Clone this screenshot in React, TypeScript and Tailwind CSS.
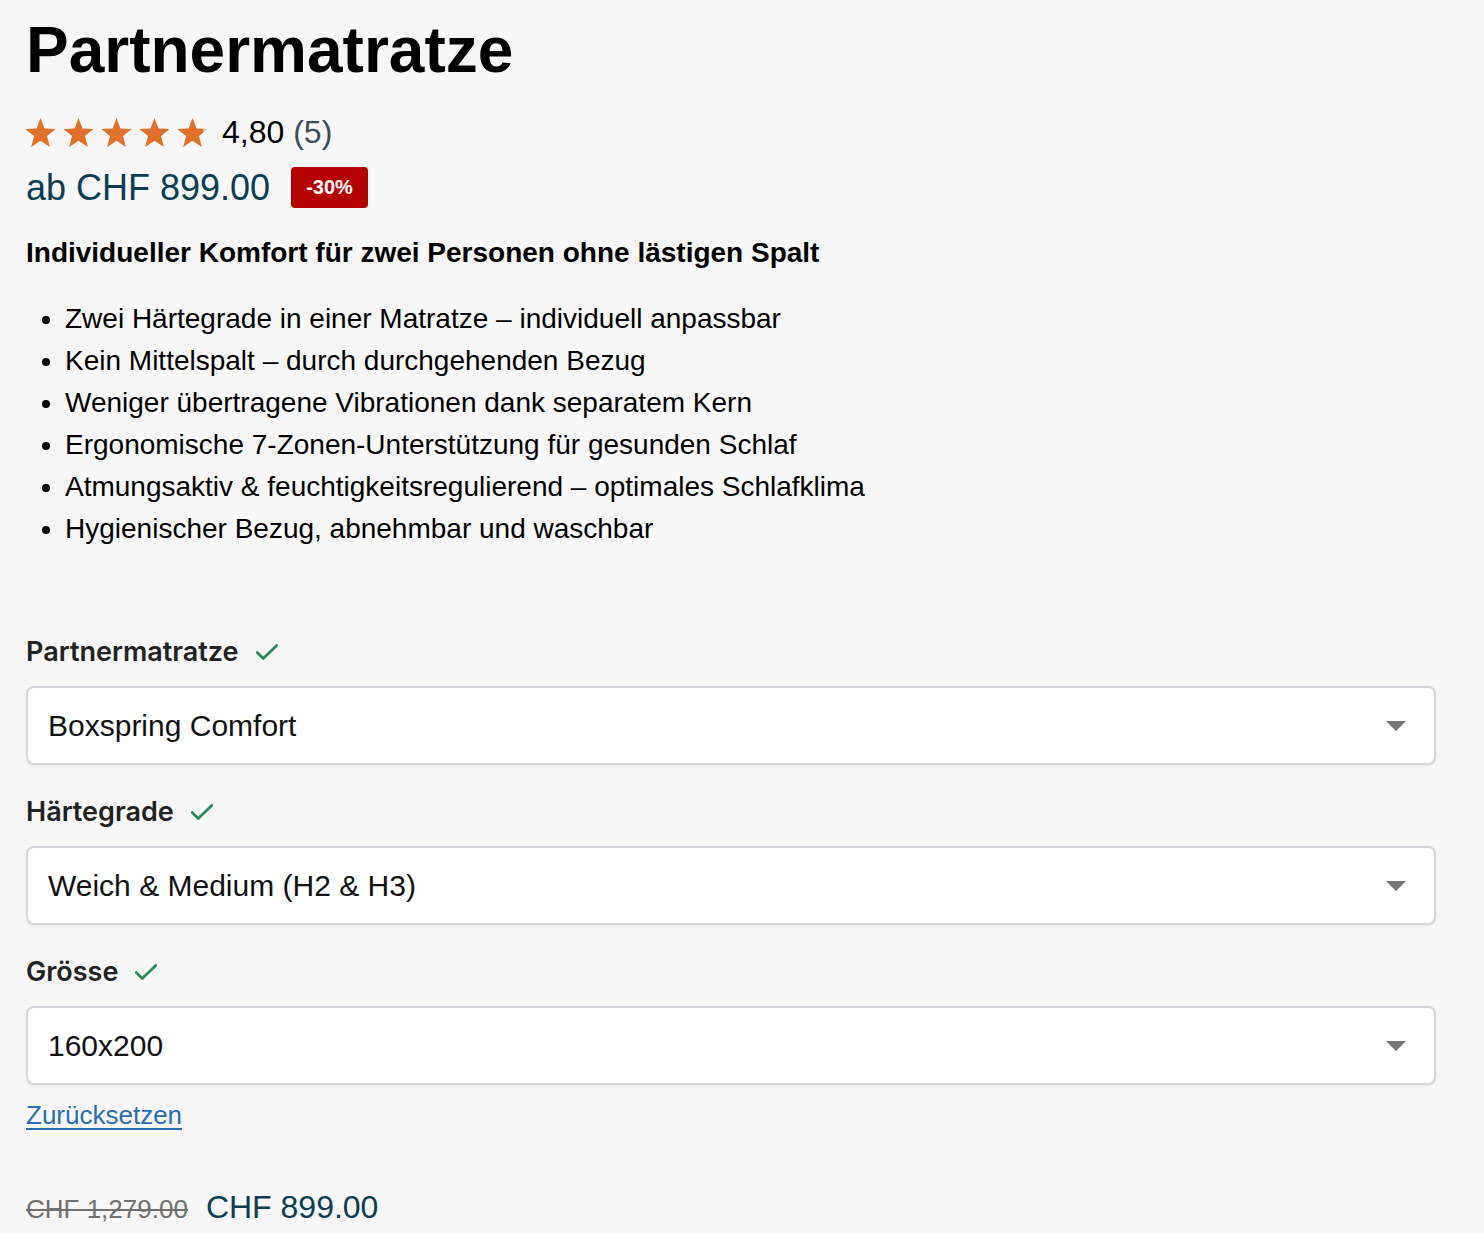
import React from 'react';

const features = [
  'Zwei Härtegrade in einer Matratze – individuell anpassbar',
  'Kein Mittelspalt – durch durchgehenden Bezug',
  'Weniger übertragene Vibrationen dank separatem Kern',
  'Ergonomische 7-Zonen-Unterstützung für gesunden Schlaf',
  'Atmungsaktiv & feuchtigkeitsregulierend – optimales Schlafklima',
  'Hygienischer Bezug, abnehmbar und waschbar',
];

const options = [
  { label: 'Partnermatratze', value: 'Boxspring Comfort' },
  { label: 'Härtegrade', value: 'Weich & Medium (H2 & H3)' },
  { label: 'Grösse', value: '160x200' },
];

function Star({ fill = 1 }: { fill?: number }) {
  const id = `star-${fill}`;
  return (
    <svg width="33" height="33" viewBox="0 0 24 24">
      <defs>
        <linearGradient id={id}>
          <stop offset={`${fill * 100}%`} stopColor="#e0702a" />
          <stop offset={`${fill * 100}%`} stopColor="#c8c8c8" />
        </linearGradient>
      </defs>
      <path
        d="M12 1.5l2.9 7.6 8.1.4-6.3 5.1 2.1 7.9L12 18l-6.8 4.5 2.1-7.9L1 9.5l8.1-.4z"
        fill={`url(#${id})`}
      />
    </svg>
  );
}

function Check() {
  return (
    <svg width="26" height="26" viewBox="0 0 24 24" fill="none" stroke="#2a8a5c" strokeWidth="2.5" strokeLinecap="round" strokeLinejoin="round">
      <path d="M3 12.5l5.5 5.5L21 6" />
    </svg>
  );
}

export default function App() {
  return (
    <div className="min-h-[1233px] bg-[#f7f7f7] px-[26px] pt-[14px] text-black" style={{ fontFamily: '"Liberation Sans", Arial, sans-serif' }}>
      <h1 className="text-[64px] font-bold leading-[72px]">Partnermatratze</h1>

      <div className="mt-[28px] flex items-center gap-[13px]">
        <div className="-ml-[2px] flex gap-[5px]">
          <Star />
          <Star />
          <Star />
          <Star />
          <Star fill={0.85} />
        </div>
        <span className="text-[32px] leading-[36px]">
          4,80 <span className="text-[#3e4b5b]">(5)</span>
        </span>
      </div>

      <div className="mt-[17px] flex items-center gap-[21px]">
        <span className="text-[36px] leading-[40px] text-[#0c3d52]">ab CHF 899.00</span>
        <span className="rounded-[4px] bg-[#b40000] px-[15px] py-[8px] text-[20px] font-bold leading-[25px] text-white">-30%</span>
      </div>

      <h2 className="mt-[29px] text-[28px] font-bold leading-[32px]">
        Individueller Komfort für zwei Personen ohne lästigen Spalt
      </h2>

      <ul className="mt-[29px] list-disc pl-[39px] text-[28px] leading-[42px]">
        {features.map((f) => (
          <li key={f}>{f}</li>
        ))}
      </ul>

      <div className="mt-[86px] flex flex-col">
        {options.map((o, i) => (
          <div key={o.label} className={i > 0 ? 'mt-[31px]' : ''}>
            <div className="flex items-center gap-[15px] text-[#222]" style={{ fontFamily: 'Inter, "Noto Sans", sans-serif' }}>
              <span className="text-[27px] font-semibold leading-[32px]">{o.label}</span>
              <Check />
            </div>
            <div className="mt-[18px] flex h-[79px] w-[1410px] items-center justify-between rounded-[8px] border-2 border-[#d6d6dc] bg-white pl-[20px] pr-[28px] shadow-[0_1px_3px_rgba(0,0,0,0.08)]">
              <span className="text-[30px] leading-[36px] text-[#111]">{o.value}</span>
              <svg width="20" height="10" viewBox="0 0 20 10">
                <path d="M0 0h20L10 10z" fill="#757575" />
              </svg>
            </div>
          </div>
        ))}
      </div>

      <a href="#" className="mt-[14px] inline-block text-[26px] leading-[32px] text-[#2a6cb5] underline underline-offset-[4px]">
        Zurücksetzen
      </a>

      <div className="mt-[52px] flex items-baseline gap-[18px]">
        <span className="text-[26px] text-[#707070] line-through">CHF 1,279.00</span>
        <span className="text-[32px] text-[#0c3d52]">CHF 899.00</span>
      </div>
    </div>
  );
}
